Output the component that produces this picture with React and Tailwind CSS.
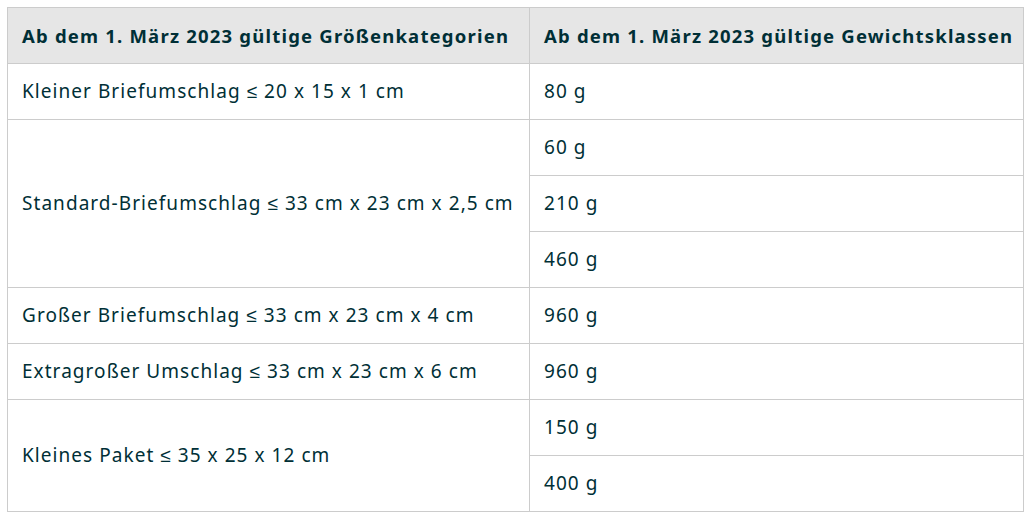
import React from 'react';

const rows = [
  { size: 'Kleiner Briefumschlag ≤ 20 x 15 x 1 cm', weights: ['80 g'] },
  { size: 'Standard-Briefumschlag ≤ 33 cm x 23 cm x 2,5 cm', weights: ['60 g', '210 g', '460 g'] },
  { size: 'Großer Briefumschlag ≤ 33 cm x 23 cm x 4 cm', weights: ['960 g'] },
  { size: 'Extragroßer Umschlag ≤ 33 cm x 23 cm x 6 cm', weights: ['960 g'] },
  { size: 'Kleines Paket ≤ 35 x 25 x 12 cm', weights: ['150 g', '400 g'] },
];

const cell = 'border border-[#cccccc] px-[14px] h-[56px] align-middle whitespace-nowrap';

export default function App() {
  return (
    <div className="bg-white min-h-screen pt-[7px] pl-[7px] pr-[4px] font-['Noto_Sans',sans-serif] text-[#002f36] text-[19px] tracking-[1.05px]">
      <table className="w-[1017px] border-collapse table-fixed">
        <colgroup>
          <col className="w-[522px]" />
          <col />
        </colgroup>
        <thead>
          <tr className="bg-[#e6e6e6]">
            <th className={`${cell} h-[55px] text-left font-bold text-[18.5px] tracking-[1.2px]`}>Ab dem 1. März 2023 gültige Größenkategorien</th>
            <th className={`${cell} h-[55px] text-left font-bold text-[18.5px] tracking-[1.2px]`}>Ab dem 1. März 2023 gültige Gewichtsklassen</th>
          </tr>
        </thead>
        <tbody>
          {rows.map((r) =>
            r.weights.map((w, i) => (
              <tr key={r.size + w}>
                {i === 0 && (
                  <td rowSpan={r.weights.length} className={cell}>
                    {r.size}
                  </td>
                )}
                <td className={cell}>{w}</td>
              </tr>
            ))
          )}
        </tbody>
      </table>
    </div>
  );
}
